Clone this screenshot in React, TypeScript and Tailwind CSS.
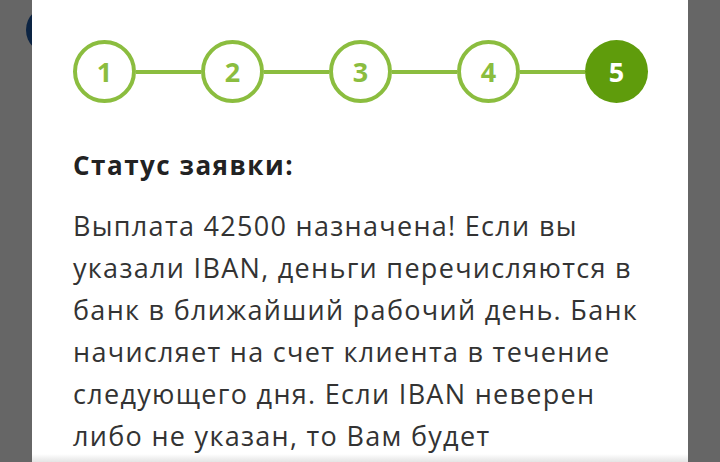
import React from 'react';

const steps = [1, 2, 3, 4, 5];
const active = 5;

const lines = [
  'Выплата 42500 назначена! Если вы',
  'указали IBAN, деньги перечисляются в',
  'банк в ближайший рабочий день. Банк',
  'начисляет на счет клиента в течение',
  'следующего дня. Если IBAN неверен',
  'либо не указан, то Вам будет',
];

function Stepper() {
  return (
    <div className="flex items-center">
      {steps.map((n, i) => (
        <React.Fragment key={n}>
          {i > 0 && <div className="h-[4px] w-[65px] bg-[#8bbd3f]" />}
          <div
            className={
              n === active
                ? 'flex h-[63px] w-[63px] shrink-0 items-center justify-center rounded-full bg-[#5f9c0c] text-white'
                : 'flex h-[63px] w-[63px] shrink-0 items-center justify-center rounded-full border-[4px] border-[#8bbd3f] text-[#8bbd3f]'
            }
          >
            <span className="text-[27px] font-bold leading-none">{n}</span>
          </div>
        </React.Fragment>
      ))}
    </div>
  );
}

export default function App() {
  return (
    <div
      className="relative flex h-[462px] w-[720px] overflow-hidden bg-[#666666] px-[32px]"
      style={{ fontFamily: '"Open Sans", "Noto Sans", sans-serif' }}
    >
      {/* dark button peeking from behind the card */}
      <div className="absolute left-[26px] top-[6px] h-[48px] w-[60px] rounded-full bg-[#0c2443]" />

      <div className="relative z-10 flex-1 bg-white pl-[41px] pt-[40px]">
        <Stepper />

        <h2 className="mt-[46px] text-[26px] font-bold leading-[32px] tracking-[1.5px] text-[#222]">Статус заявки:</h2>

        <p className="mt-[24px] text-[27px] leading-[42px] tracking-[1.3px] text-[#333]">
          {lines.map((l) => (
            <span key={l} className="block whitespace-nowrap">
              {l}
            </span>
          ))}
        </p>

        <div className="absolute bottom-0 left-0 right-0 h-[8px] bg-gradient-to-b from-white to-[#e4e4e4]" />
      </div>
    </div>
  );
}
